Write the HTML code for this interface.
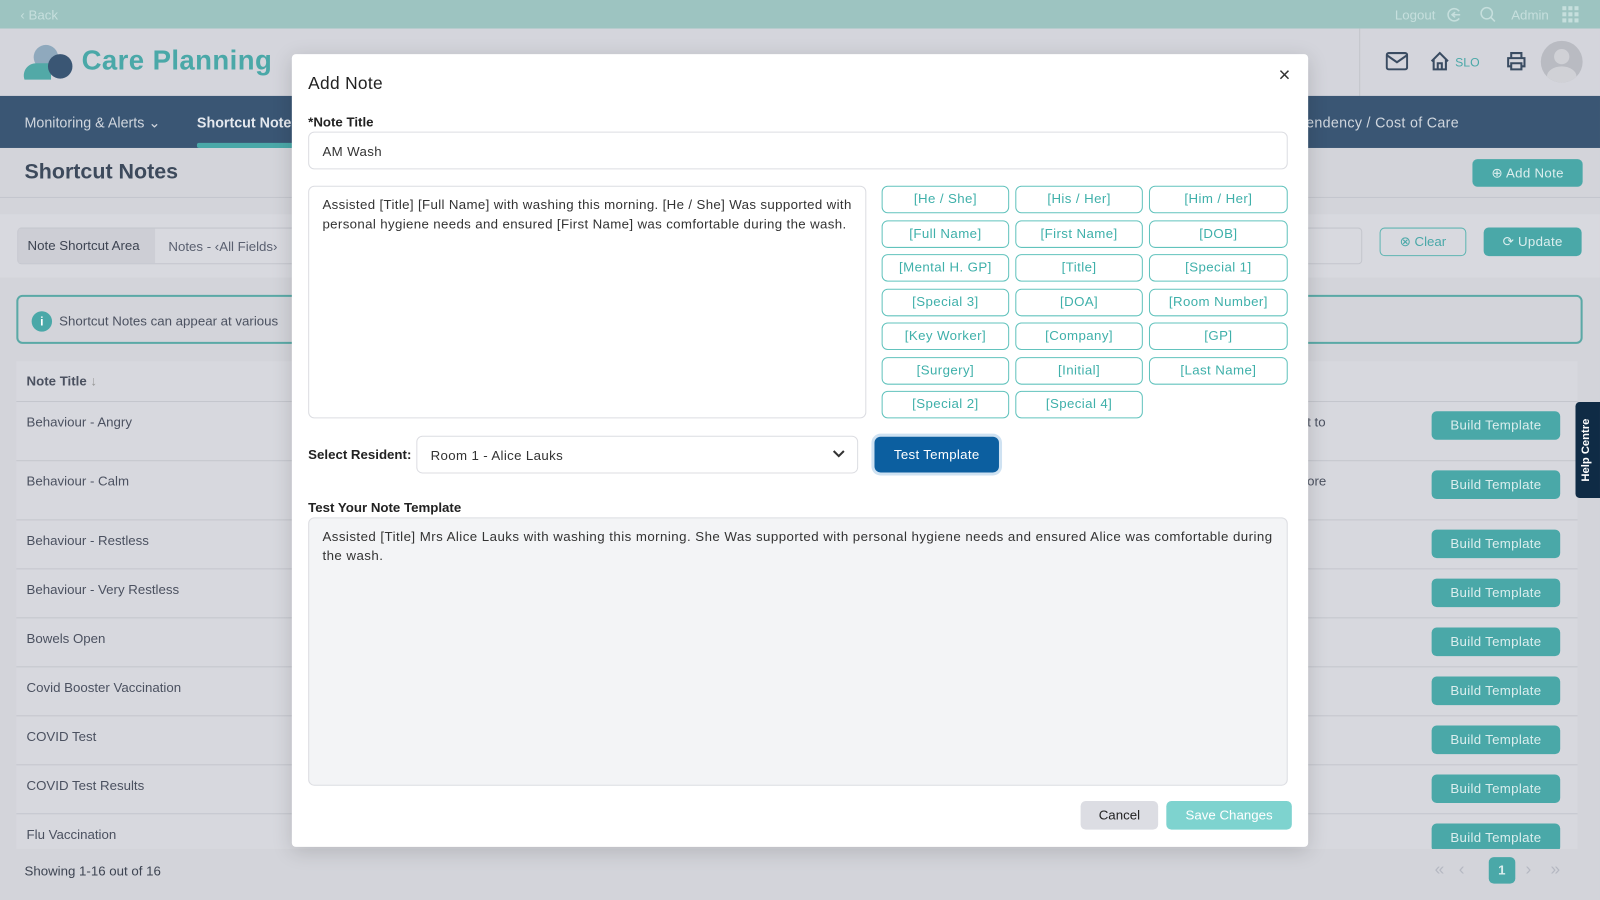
<!DOCTYPE html>
<html><head><meta charset="utf-8">
<style>
*{box-sizing:border-box;margin:0;padding:0}
html,body{width:1600px;height:900px;overflow:hidden;background:#d3d4da}
body{font-family:"Liberation Sans",sans-serif;color:#3d4452}
#w{position:absolute;left:0;top:0;width:1568px;height:882px;transform:scale(1.0204,1.0204);transform-origin:0 0;background:#d3d4da}
.a{position:absolute}
.top{left:0;top:0;width:1568px;height:28px;background:#9dc4c1;color:#c6dfdd;font-size:13px}
.hdr{left:0;top:28px;width:1568px;height:66px;background:#d4d5dc}
.nav{left:0;top:94px;width:1568px;height:51px;background:#3a5674;color:#d0d6de;font-size:14px}
.btn{position:absolute;background:#4aa8a8;color:#dbeeee;border-radius:5px;font-size:13px;text-align:center;letter-spacing:.3px}
.row{position:absolute;left:16px;width:1530px;border-bottom:1px solid #c4c6cd;font-size:13px;color:#4b5160}
.row span{position:absolute;left:10px;top:12px}
.row .btn{left:1387px;width:126px;height:28px;line-height:28px}
.modal{left:286px;top:53px;width:996px;height:777px;background:#fff;border-radius:4px;box-shadow:0 4px 20px rgba(0,0,0,.15)}
.lbl{position:absolute;font-size:13px;font-weight:bold;color:#222}
.box{position:absolute;border:1px solid #dcdde2;border-radius:6px;font-size:13px;color:#333;line-height:19px;letter-spacing:.35px}
.tag{position:absolute;width:125px;height:27px;border:1.5px solid #62c3bd;border-radius:6px;color:#3fb0aa;font-size:13px;text-align:center;line-height:24px;letter-spacing:.4px}
</style></head><body><div id="w">
<div class="a top"><span class="a" style="left:20px;top:7px">‹ Back</span>
<span class="a" style="left:1367px;top:7px">Logout</span>
<svg class="a" style="left:1418px;top:7px" width="15" height="15"><path d="M12 4A6 6 0 1 0 12 11M5 7.5h8M8 5l-3 2.5L8 10" fill="none" stroke="#c6dfdd" stroke-width="1.5"/></svg>
<svg class="a" style="left:1450px;top:6px" width="16" height="16"><circle cx="7" cy="7" r="5.5" fill="none" stroke="#c6dfdd" stroke-width="1.5"/><path d="M11 11l4 4" stroke="#c6dfdd" stroke-width="1.5"/></svg>
<span class="a" style="left:1481px;top:7px">Admin</span>
<svg class="a" style="left:1531px;top:6px" width="16" height="16"><g fill="#c6dfdd"><rect x="0" y="0" width="4" height="4"/><rect x="6" y="0" width="4" height="4"/><rect x="12" y="0" width="4" height="4"/><rect x="0" y="6" width="4" height="4"/><rect x="6" y="6" width="4" height="4"/><rect x="12" y="6" width="4" height="4"/><rect x="0" y="12" width="4" height="4"/><rect x="6" y="12" width="4" height="4"/><rect x="12" y="12" width="4" height="4"/></g></svg></div>
<div class="a hdr">
<svg class="a" style="left:23px;top:15px" width="50" height="36"><circle cx="22" cy="13" r="12" fill="#8fa9bd"/><path d="M1 35a12 12 0 0 1 12-16h14v16z" fill="#52a9a7"/><circle cx="36" cy="22" r="12" fill="#3a5674"/></svg>
<div class="a" style="left:80px;top:16px;font-size:27px;font-weight:bold;color:#4aa8a8;letter-spacing:.4px">Care Planning</div>
<div class="a" style="left:1332px;top:0;width:1px;height:66px;background:#c4c6cc"></div>
<svg class="a" style="left:1358px;top:23px" width="22" height="18"><rect x="1" y="1" width="20" height="16" rx="2" fill="none" stroke="#3a4c62" stroke-width="2"/><path d="M1 3l10 7 10-7" fill="none" stroke="#3a4c62" stroke-width="2"/></svg>
<svg class="a" style="left:1401px;top:22px" width="20" height="20"><path d="M2 10L10 2l8 8M4 8v10h12V8M8 18v-6h4v6" fill="none" stroke="#3a4c62" stroke-width="2"/></svg>
<span class="a" style="left:1426px;top:26px;font-size:12px;color:#4aa8a8">SLO</span>
<svg class="a" style="left:1476px;top:22px" width="20" height="20"><path d="M5 7V2h10v5M5 15H2V7h16v8h-3M5 12h10v6H5z" fill="none" stroke="#3a4c62" stroke-width="2"/></svg>
<div class="a" style="left:1510px;top:12px;width:41px;height:41px;border-radius:50%;background:#b9bbc2;overflow:hidden"><div class="a" style="left:13px;top:8px;width:15px;height:15px;border-radius:50%;background:#d0d1d6"></div><div class="a" style="left:6px;top:25px;width:29px;height:20px;border-radius:50%;background:#d0d1d6"></div></div>
</div>
<div class="a nav"><span class="a" style="left:24px;top:18px">Monitoring &amp; Alerts ⌄</span><span class="a" style="left:193px;top:18px;font-weight:bold;color:#e4e8ee">Shortcut Notes</span><div class="a" style="left:193px;top:46px;width:100px;height:5px;background:#4aa8a8;border-radius:2px"></div><span class="a" style="left:1280px;top:18px;letter-spacing:.3px">endency / Cost of Care</span></div>
<div class="a" style="left:24px;top:157px;font-size:21px;font-weight:bold;color:#3d4a5c">Shortcut Notes</div>
<div class="btn" style="left:1443px;top:156px;width:108px;height:27px;line-height:27px">⊕ Add Note</div>
<div class="a" style="left:0;top:193px;width:1568px;height:1px;background:#c4c6cd"></div>
<div class="a" style="left:0;top:210px;width:1568px;height:62px;background:#d8d9df"></div>
<div class="a" style="left:17px;top:223px;width:1318px;height:36px;border:1px solid #c4c6cd;border-radius:4px;font-size:13px"><span class="a" style="left:0;top:0;width:134px;height:34px;background:#cdced5;line-height:34px;padding-left:9px;color:#3d4452">Note Shortcut Area</span><span class="a" style="left:147px;top:10px;color:#5a6070">Notes - ‹All Fields›</span></div>
<div class="a" style="left:1352px;top:223px;width:85px;height:28px;border:1px solid #5fb5b2;border-radius:5px;color:#4aa8a8;font-size:13px;text-align:center;line-height:26px">⊗ Clear</div>
<div class="btn" style="left:1454px;top:223px;width:96px;height:28px;line-height:28px">⟳ Update</div>
<div class="a" style="left:16px;top:289px;width:1535px;height:48px;border:2px solid #5aa9a6;border-radius:6px;font-size:13px"><span class="a" style="left:13px;top:14px;width:20px;height:20px;border-radius:50%;background:#4aa8a8;color:#fff;text-align:center;font-size:12px;line-height:20px;font-weight:bold">i</span><span class="a" style="left:40px;top:16px;color:#4b5160">Shortcut Notes can appear at various</span></div>
<div class="a" style="left:16px;top:354px;width:1530px;height:478px;background:#d7d8de"></div>
<div class="row" style="top:354px;height:40px;font-weight:bold"><span style="top:12px">Note Title <span style="position:static;font-weight:normal;color:#999">↓</span></span></div>
<div class="row" style="top:394px;height:58px"><span>Behaviour - Angry</span><span style="left:1265px">t to</span><div class="btn" style="top:9px">Build Template</div></div>
<div class="row" style="top:452px;height:58px"><span>Behaviour - Calm</span><span style="left:1265px">ore</span><div class="btn" style="top:9px">Build Template</div></div>
<div class="row" style="top:510px;height:48px"><span>Behaviour - Restless</span><div class="btn" style="top:9px">Build Template</div></div>
<div class="row" style="top:558px;height:48px"><span>Behaviour - Very Restless</span><div class="btn" style="top:9px">Build Template</div></div>
<div class="row" style="top:606px;height:48px"><span>Bowels Open</span><div class="btn" style="top:9px">Build Template</div></div>
<div class="row" style="top:654px;height:48px"><span>Covid Booster Vaccination</span><div class="btn" style="top:9px">Build Template</div></div>
<div class="row" style="top:702px;height:48px"><span>COVID Test</span><div class="btn" style="top:9px">Build Template</div></div>
<div class="row" style="top:750px;height:48px"><span>COVID Test Results</span><div class="btn" style="top:9px">Build Template</div></div>
<div class="row" style="top:798px;height:34px;border:none;overflow:hidden"><span>Flu Vaccination</span><div class="btn" style="top:9px">Build Template</div></div>
<div class="a" style="left:0;top:832px;width:1568px;height:50px;background:#d3d4da"></div>
<div class="a" style="left:24px;top:846px;font-size:13px;color:#3d4452">Showing 1-16 out of 16</div>
<div class="a" style="left:1406px;top:842px;font-size:17px;color:#b5b8c2;letter-spacing:0">«&nbsp;&nbsp;&nbsp;‹</div>
<div class="btn" style="left:1459px;top:840px;width:26px;height:26px;line-height:26px;font-weight:bold">1</div>
<div class="a" style="left:1495px;top:842px;font-size:17px;color:#b5b8c2">›&nbsp;&nbsp;&nbsp;&nbsp;»</div>
<div class="a" style="left:1544px;top:394px;width:24px;height:94px;background:#0f2b45;border-radius:4px 0 0 4px"><span class="a" style="left:4px;top:78px;transform:rotate(-90deg);transform-origin:0 0;color:#fff;font-size:11px;font-weight:bold;white-space:nowrap">Help Centre</span></div>

<div class="a modal">
<div class="a" style="left:16px;top:19px;font-size:17px;color:#222;letter-spacing:.3px">Add Note</div>
<div class="a" style="left:967px;top:10px;font-size:20px;color:#333">×</div>
<div class="lbl" style="left:16px;top:59px">*Note Title</div>
<div class="box" style="left:16px;top:76px;width:960px;height:37px;padding:9px 13px">AM Wash</div>
<div class="box" style="left:16px;top:129px;width:547px;height:228px;padding:8px 13px">Assisted [Title] [Full Name] with washing this morning. [He / She] Was supported with personal hygiene needs and ensured [First Name] was comfortable during the wash.</div>
<div class="tag" style="left:578px;top:129px">[He / She]</div><div class="tag" style="left:709px;top:129px">[His / Her]</div><div class="tag" style="left:840px;top:129px;width:136px">[Him / Her]</div>
<div class="tag" style="left:578px;top:163px">[Full Name]</div><div class="tag" style="left:709px;top:163px">[First Name]</div><div class="tag" style="left:840px;top:163px;width:136px">[DOB]</div>
<div class="tag" style="left:578px;top:196px">[Mental H. GP]</div><div class="tag" style="left:709px;top:196px">[Title]</div><div class="tag" style="left:840px;top:196px;width:136px">[Special 1]</div>
<div class="tag" style="left:578px;top:230px">[Special 3]</div><div class="tag" style="left:709px;top:230px">[DOA]</div><div class="tag" style="left:840px;top:230px;width:136px">[Room Number]</div>
<div class="tag" style="left:578px;top:263px">[Key Worker]</div><div class="tag" style="left:709px;top:263px">[Company]</div><div class="tag" style="left:840px;top:263px;width:136px">[GP]</div>
<div class="tag" style="left:578px;top:297px">[Surgery]</div><div class="tag" style="left:709px;top:297px">[Initial]</div><div class="tag" style="left:840px;top:297px;width:136px">[Last Name]</div>
<div class="tag" style="left:578px;top:330px">[Special 2]</div><div class="tag" style="left:709px;top:330px">[Special 4]</div>
<div class="lbl" style="left:16px;top:385px">Select Resident:</div>
<div class="box" style="left:122px;top:374px;width:433px;height:37px;padding:9px 13px">Room 1 - Alice Lauks<svg style="position:absolute;right:12px;top:13px" width="12" height="8"><path d="M1 1l5 5 5-5" fill="none" stroke="#333" stroke-width="2"/></svg></div>
<div class="a" style="left:571px;top:375px;width:122px;height:35px;border-radius:6px;background:#0c5fa0;box-shadow:0 0 0 3px #cfe2f2;color:#fff;font-size:13px;text-align:center;line-height:35px;letter-spacing:.3px">Test Template</div>
<div class="lbl" style="left:16px;top:437px">Test Your Note Template</div>
<div class="box" style="left:16px;top:454px;width:960px;height:263px;padding:8px 13px;background:#f3f4f6;letter-spacing:.45px">Assisted [Title] Mrs Alice Lauks with washing this morning. She Was supported with personal hygiene needs and ensured Alice was comfortable during the wash.</div>
<div class="a" style="left:773px;top:732px;width:76px;height:28px;border-radius:5px;background:#dcdde3;color:#222;font-size:13px;text-align:center;line-height:28px">Cancel</div>
<div class="a" style="left:857px;top:732px;width:123px;height:28px;border-radius:5px;background:#7ed3cf;color:#fff;font-size:13px;text-align:center;line-height:28px">Save Changes</div>
</div>
</div></body></html>
